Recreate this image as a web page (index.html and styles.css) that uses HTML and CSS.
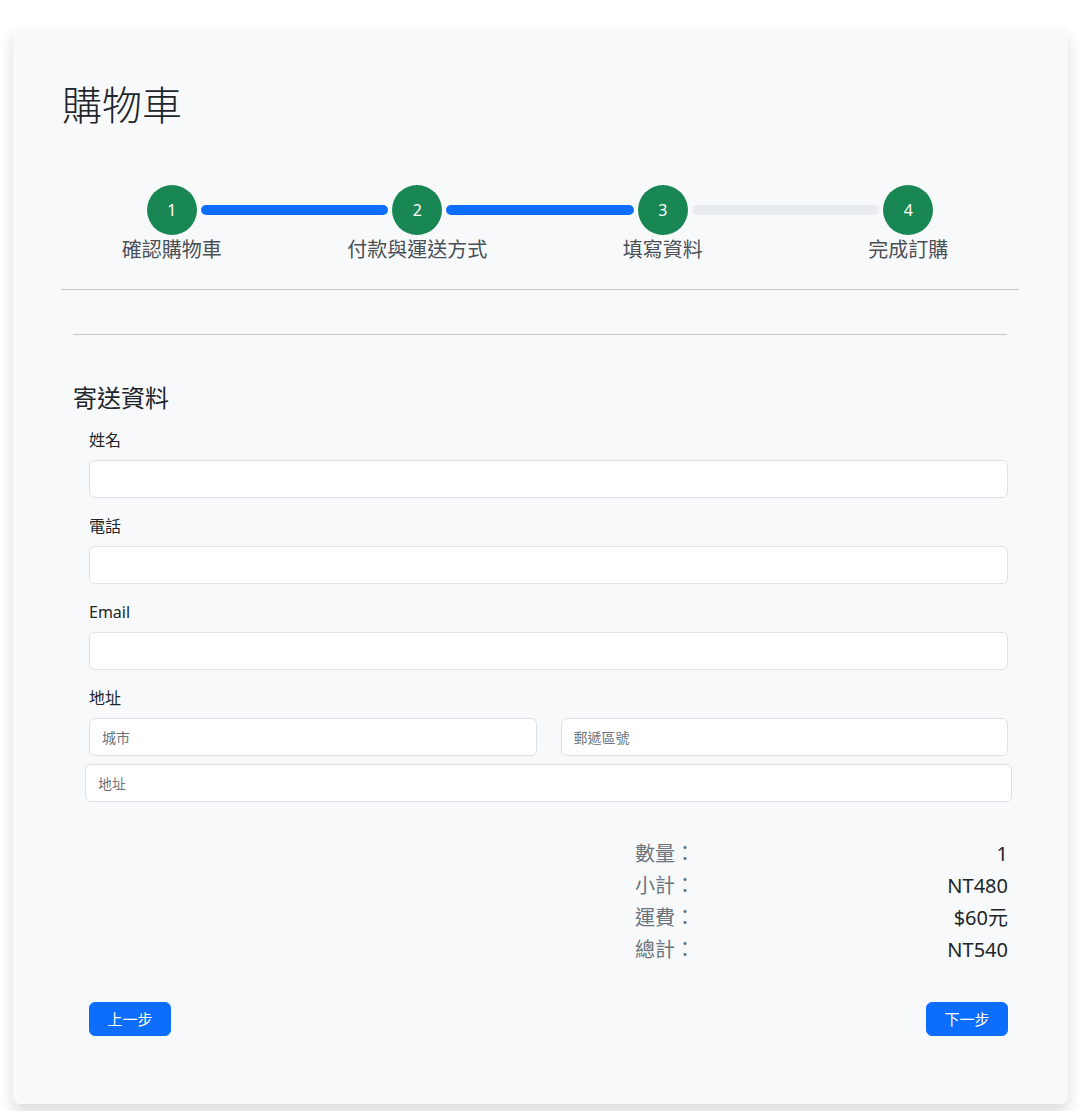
FILE: index.html
```html
<!DOCTYPE html>
<html lang="zh-Hant">
<head>
<meta charset="utf-8">
<title>購物車</title>
<link rel="stylesheet" href="styles.css">
</head>
<body>
<div class="card">
  <h1 class="title">購物車</h1>
  <div class="stepper">
    <div class="step done"><div class="circle">1</div><div class="step-label">確認購物車</div></div>
    <div class="step done"><div class="circle">2</div><div class="step-label">付款與運送方式</div></div>
    <div class="step todo"><div class="circle">3</div><div class="step-label">填寫資料</div></div>
    <div class="step last"><div class="circle">4</div><div class="step-label">完成訂購</div></div>
  </div>
  <div class="rule"></div>
  <div class="inner">
    <div class="rule rule2"></div>
    <h4 class="section-title">寄送資料</h4>
    <form class="form">
      <div class="group">
        <label class="label">姓名</label>
        <input class="control" type="text">
      </div>
      <div class="group">
        <label class="label">電話</label>
        <input class="control" type="text">
      </div>
      <div class="group">
        <label class="label">Email</label>
        <input class="control" type="text">
      </div>
      <div class="group addr">
        <label class="label">地址</label>
        <div class="addr-row">
          <input class="control" type="text" placeholder="城市">
          <input class="control" type="text" placeholder="郵遞區號">
        </div>
        <input class="control wide" type="text" placeholder="地址">
      </div>
      <div class="summary">
        <div class="sum-row"><span class="sum-key">數量：</span><span class="sum-val">1</span></div>
        <div class="sum-row"><span class="sum-key">小計：</span><span class="sum-val">NT480</span></div>
        <div class="sum-row"><span class="sum-key">運費：</span><span class="sum-val">$60元</span></div>
        <div class="sum-row"><span class="sum-key">總計：</span><span class="sum-val">NT540</span></div>
      </div>
      <div class="actions">
        <button type="button" class="btn">上一步</button>
        <button type="button" class="btn">下一步</button>
      </div>
    </form>
  </div>
</div>
</body>
</html>
```
FILE: styles.css
```css
* { box-sizing: border-box; }
html, body { margin: 0; padding: 0; background: #fff; }
body {
  font-family: "Noto Sans", "Noto Sans CJK TC", sans-serif;
  color: #212529;
  font-size: 16px;
  line-height: 24px;
}
.card {
  margin: 28px 20px 7px 13px;
  background: #f8f9fa;
  border-radius: 7px;
  box-shadow: 0 8px 16px rgba(0,0,0,.15);
  padding: 48px 49px 68px 48px;
}
.title {
  margin: 5px 0 0 0;
  padding-left: 1px;
  font-size: 40px;
  line-height: 48px;
  font-weight: 300;
  color: #212529;
}
.stepper {
  margin: 56px -12px 0 -12px;
  display: grid;
  grid-template-columns: repeat(4, 1fr);
}
.step {
  position: relative;
  display: flex;
  flex-direction: column;
  align-items: center;
}
.step::after {
  content: "";
  position: absolute;
  top: 20px;
  left: calc(50% + 29px);
  width: calc(100% - 58px);
  height: 10px;
  border-radius: 5px;
  background: #0d6efd;
}
.step.todo::after { background: #e9ecef; }
.step.last::after { display: none; }
.circle {
  width: 50px;
  height: 50px;
  border-radius: 50%;
  background: #198754;
  color: #fff;
  font-size: 16px;
  display: flex;
  align-items: center;
  justify-content: center;
}
.step-label {
  font-size: 20px;
  line-height: 30px;
  color: #495057;
}
.rule {
  height: 1px;
  background: #c7c8c9;
  margin-top: 24px;
}
.inner {
  padding: 0 12px;
}
.rule2 { margin-top: 44px; }
.section-title {
  margin: 48px 0 16px 0;
  font-size: 24px;
  line-height: 29px;
  font-weight: 400;
  color: #212529;
}
.form {
  padding-left: 16px;
  margin-right: -1px;
}
.group { margin-bottom: 16px; }
.label {
  display: block;
  font-size: 16px;
  line-height: 24px;
  margin-bottom: 8px;
  color: #212529;
}
.control {
  display: block;
  width: 100%;
  height: 38px;
  border: 1px solid #dee2e6;
  border-radius: 6px;
  background: #fff;
  padding: 0 12px;
  font-family: inherit;
  font-size: 14px;
  color: #212529;
  outline: none;
}
.control::placeholder { color: #6c757d; }
.addr-row {
  display: grid;
  grid-template-columns: 1fr 1fr;
  gap: 24px;
}
.control.wide {
  width: calc(100% + 8px);
  margin: 8px -4px 0 -4px;
}
.group.addr { margin-bottom: 0; }
.summary {
  margin: 36px 0 0 auto;
  width: 373px;
}
.sum-row {
  display: flex;
  justify-content: space-between;
  font-size: 20px;
  line-height: 32px;
}
.sum-key { color: #6c757d; }
.sum-val { color: #212529; }
.actions {
  margin-top: 36px;
  display: flex;
  justify-content: space-between;
}
.btn {
  font-family: inherit;
  font-size: 15px;
  line-height: 24px;
  padding: 4px 17px;
  border: 1px solid #0d6efd;
  border-radius: 6px;
  background: #0d6efd;
  color: #fff;
  width: 82px;
  cursor: pointer;
}
```
